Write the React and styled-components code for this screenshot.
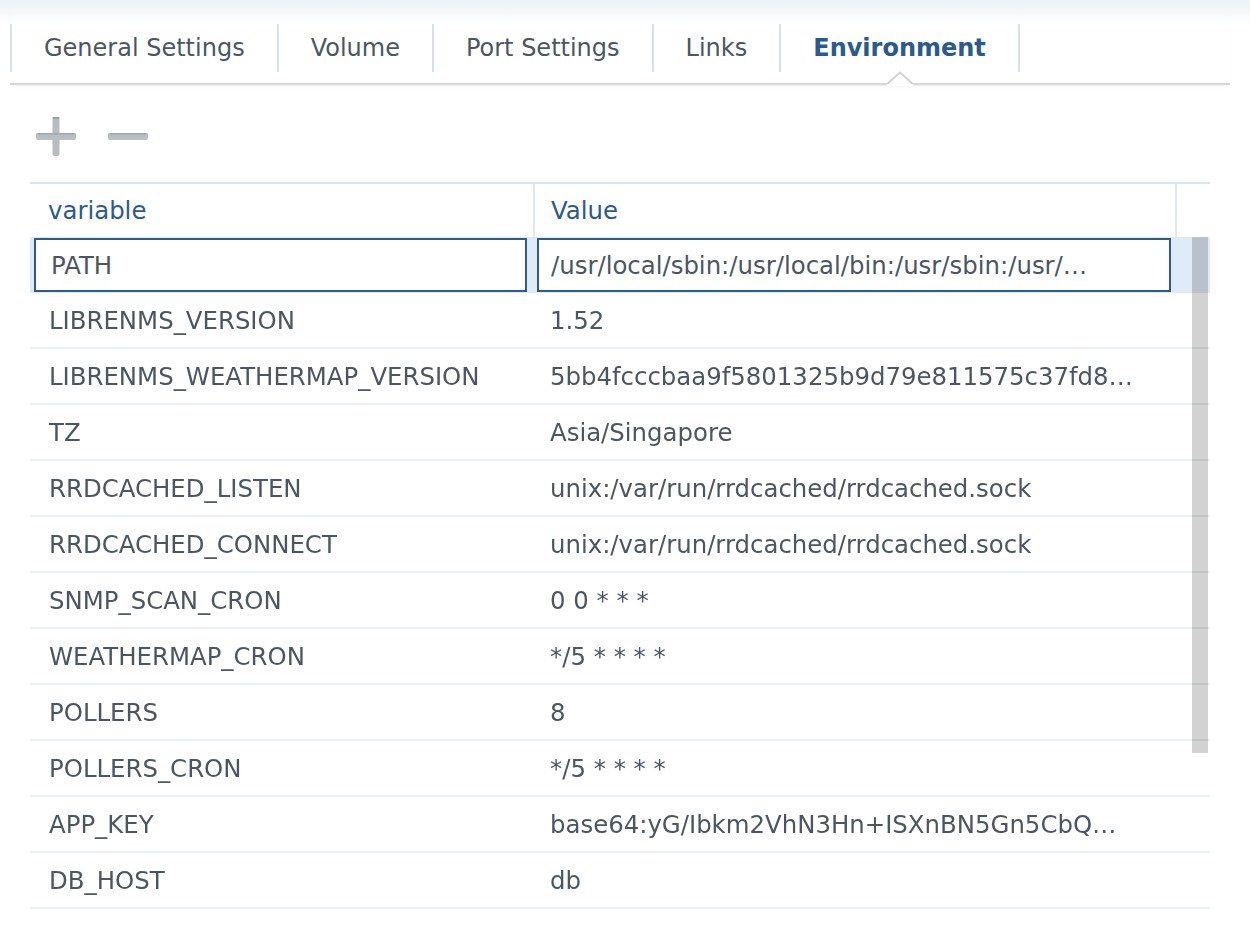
import React, { useEffect, useRef } from 'react';
import styled, { createGlobalStyle } from 'styled-components';

const GlobalStyle = createGlobalStyle`
  html, body {
    margin: 0;
    background: #fff;
  }
  body {
    font-family: "DejaVu Sans", Verdana, sans-serif;
    color: #4c5663;
  }
`;

const Page = styled.div`
  width: 1250px;
  min-height: 938px;
  background: linear-gradient(#edf2f7 0, #ffffff 26px) no-repeat;
`;

const TabBar = styled.div`
  margin: 0 20px 0 10px;
  padding: 24px 0 11px;
  border-bottom: 2px solid #d6d7d9;
  box-shadow: 0 3px 3px -2px rgba(0, 0, 0, 0.08);
`;

const TabList = styled.div`
  display: flex;
  height: 48px;
  border-left: 2px solid #d6e1ec;
`;

const Tab = styled.div`
  position: relative;
  display: flex;
  align-items: center;
  padding: 0 32px;
  border-right: 2px solid #d6e1ec;
  font-size: 24px;
  white-space: nowrap;
  color: ${(p) => (p.$active ? '#2b5a8e' : '#4c5663')};
  font-weight: ${(p) => (p.$active ? 700 : 400)};
`;

const Pointer = styled.svg`
  position: absolute;
  left: 50%;
  bottom: -14px;
  transform: translateX(-50%);
`;

const Toolbar = styled.div`
  display: flex;
  gap: 32px;
  margin: 32px 0 26px 36px;
`;

const IconButton = styled.button`
  padding: 0;
  border: none;
  background: none;
  cursor: pointer;
  display: flex;
  align-items: center;
  height: 39px;
`;

const Table = styled.div`
  margin: 0 40px 0 30px;
  font-size: 24.4px;
`;

const columns = '505px 642px 1fr';

const HeaderRow = styled.div`
  display: grid;
  grid-template-columns: ${columns};
  height: 55px;
  border-top: 2px solid #dce5ee;
  box-sizing: border-box;
`;

const HeaderCell = styled.div`
  display: flex;
  align-items: center;
  padding-left: ${(p) => (p.$first ? '18px' : '16px')};
  color: #2b5a8e;
  border-right: ${(p) => (p.$last ? 'none' : '2px solid #e0e8f0')};
`;

const Body = styled.div`
  position: relative;
`;

const Row = styled.div`
  display: grid;
  grid-template-columns: ${columns};
  height: 56px;
  box-sizing: border-box;
  background: ${(p) => (p.$selected ? '#e0ebf8' : '#fff')};
  border-bottom: ${(p) => (p.$selected ? 'none' : '2px solid #e9eef3')};
`;

const Cell = styled.div`
  display: flex;
  align-items: center;
  padding-left: ${(p) => (p.$first ? '19px' : '15px')};
  white-space: nowrap;
  overflow: hidden;
`;

const EditCell = styled.div`
  display: flex;
  align-items: center;
  padding: ${(p) => (p.$first ? '0 8px 0 4px' : '0 6px 0 2px')};
`;

const Input = styled.input`
  width: 100%;
  height: 54px;
  box-sizing: border-box;
  margin: 0;
  border: 2px solid #2d5b8e;
  border-radius: 0;
  background: #fff;
  outline: none;
  font-family: "DejaVu Sans", Verdana, sans-serif;
  font-size: 24.4px;
  color: #4c5663;
  caret-color: #333;
  padding: ${(p) => (p.$first ? '0 12px 0 15px' : '0 74px 0 12px')};
  text-overflow: ellipsis;
`;

const Scrollbar = styled.div`
  position: absolute;
  top: 0;
  right: 2px;
  width: 16px;
  height: 516px;
  background: rgba(0, 0, 0, 0.175);
`;

const tabs = ['General Settings', 'Volume', 'Port Settings', 'Links', 'Environment'];

const rows = [
  ['LIBRENMS_VERSION', '1.52'],
  ['LIBRENMS_WEATHERMAP_VERSION', '5bb4fcccbaa9f5801325b9d79e811575c37fd8…'],
  ['TZ', 'Asia/Singapore'],
  ['RRDCACHED_LISTEN', 'unix:/var/run/rrdcached/rrdcached.sock'],
  ['RRDCACHED_CONNECT', 'unix:/var/run/rrdcached/rrdcached.sock'],
  ['SNMP_SCAN_CRON', '0 0 * * *'],
  ['WEATHERMAP_CRON', '*/5 * * * *'],
  ['POLLERS', '8'],
  ['POLLERS_CRON', '*/5 * * * *'],
  ['APP_KEY', 'base64:yG/Ibkm2VhN3Hn+ISXnBN5Gn5CbQ…'],
  ['DB_HOST', 'db'],
];

const barGradient = (
  <linearGradient id="bar" x1="0" y1="0" x2="0" y2="1">
    <stop offset="0" stopColor="#9a9fa6" />
    <stop offset="0.3" stopColor="#b9bdc2" />
    <stop offset="1" stopColor="#bcc0c5" />
  </linearGradient>
);

const PlusIcon = () => (
  <svg width="40" height="39" viewBox="0 0 40 39">
    <defs>{barGradient}</defs>
    <rect x="16.5" y="0" width="7" height="39" rx="2" fill="#b9bdc2" />
    <rect x="16.5" y="0" width="7" height="2" rx="1" fill="#9a9fa6" />
    <rect x="0" y="16" width="40" height="7" rx="2" fill="url(#bar)" />
  </svg>
);

const MinusIcon = () => (
  <svg width="40" height="39" viewBox="0 0 40 39">
    <rect x="0" y="16" width="40" height="7" rx="2" fill="url(#bar)" />
  </svg>
);

const App = () => {
  const nameRef = useRef(null);

  useEffect(() => {
    const el = nameRef.current;
    if (el) {
      el.focus();
      el.setSelectionRange(el.value.length, el.value.length);
    }
  }, []);

  return (
    <Page>
      <GlobalStyle />
      <TabBar>
        <TabList>
          {tabs.map((t) => (
            <Tab key={t} $active={t === 'Environment'}>
              {t}
              {t === 'Environment' && (
                <Pointer width="26" height="15" viewBox="0 0 26 15">
                  <path d="M0 15 L0 13 L13 1.5 L26 13 L26 15 Z" fill="#fff" />
                  <path d="M0 13 L13 1.5 L26 13" fill="none" stroke="#d2d3d5" strokeWidth="2" />
                </Pointer>
              )}
            </Tab>
          ))}
        </TabList>
      </TabBar>

      <Toolbar>
        <IconButton aria-label="Add">
          <PlusIcon />
        </IconButton>
        <IconButton aria-label="Remove">
          <MinusIcon />
        </IconButton>
      </Toolbar>

      <Table>
        <HeaderRow>
          <HeaderCell $first>variable</HeaderCell>
          <HeaderCell>Value</HeaderCell>
          <HeaderCell $last />
        </HeaderRow>
        <Body>
          <Row $selected>
            <EditCell $first>
              <Input ref={nameRef} $first defaultValue="PATH" />
            </EditCell>
            <EditCell>
              <Input defaultValue="/usr/local/sbin:/usr/local/bin:/usr/sbin:/usr/bin:/sbin:/bin" />
            </EditCell>
            <div />
          </Row>
          {rows.map(([name, value]) => (
            <Row key={name}>
              <Cell $first>{name}</Cell>
              <Cell>{value}</Cell>
              <div />
            </Row>
          ))}
          <Scrollbar />
        </Body>
      </Table>
    </Page>
  );
};

export default App;
